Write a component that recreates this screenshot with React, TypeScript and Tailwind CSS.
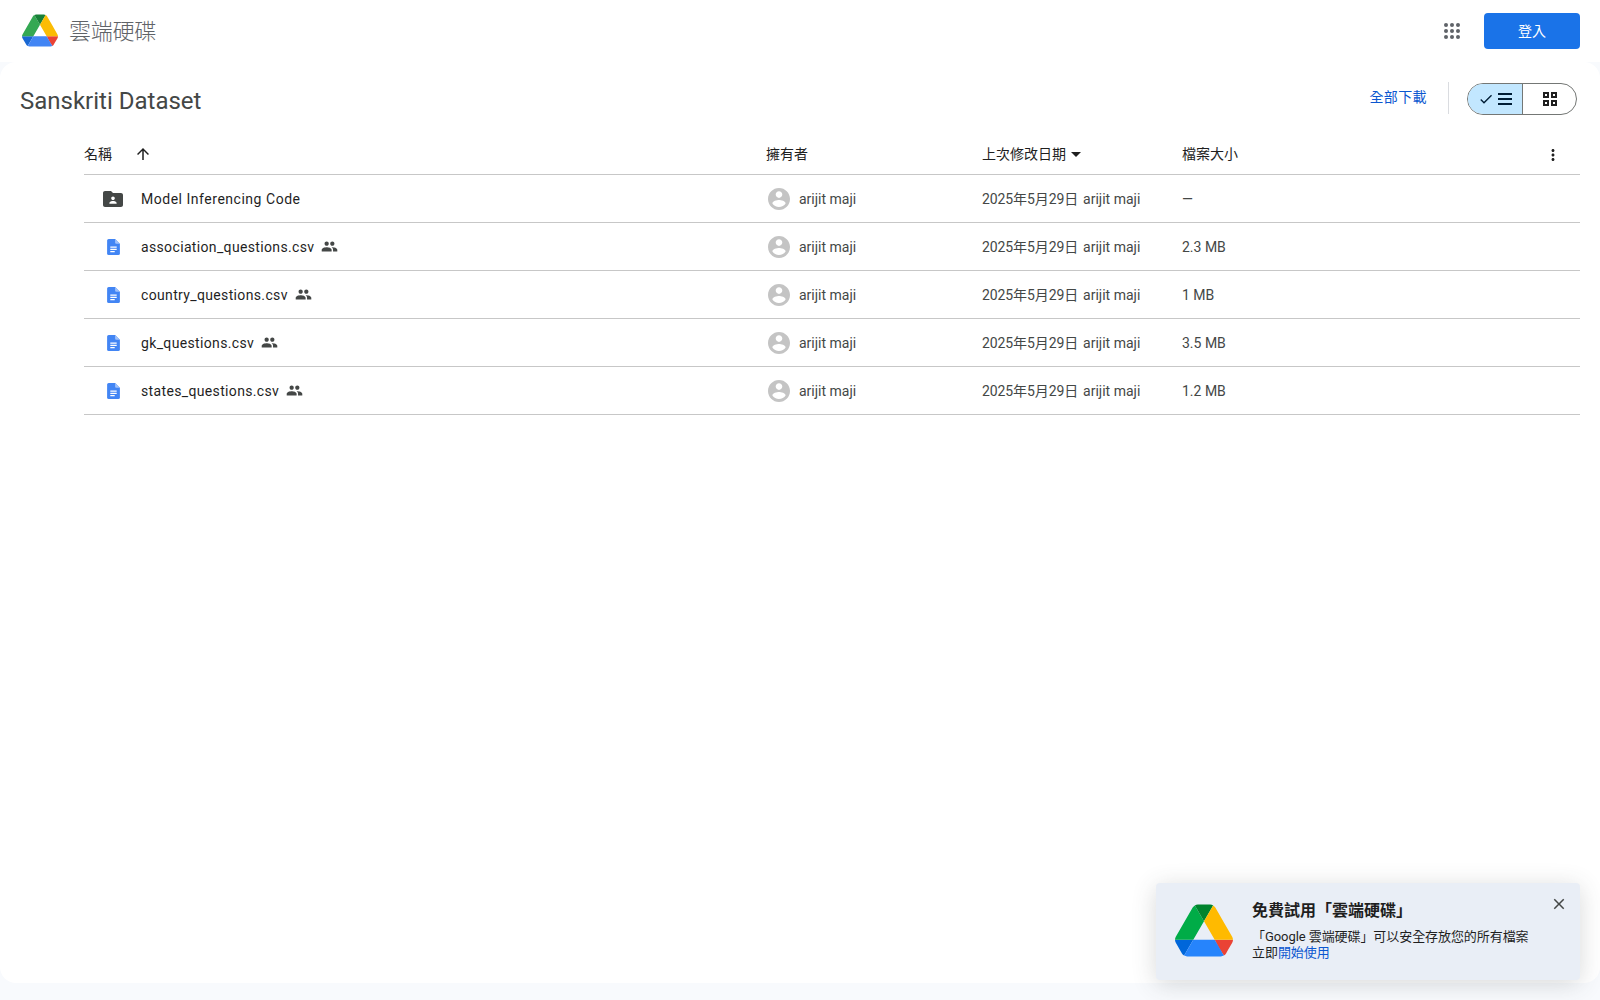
const F = "font-['Roboto','Noto_Sans_CJK_TC',sans-serif]";

function GoogleLogo({ cls, v }: { cls: string; v: 0 | 1 }) {
  const c = v === 0
    ? ["#1967d2", "#34a853", "#ea4335", "#188038", "#4285f4", "#fbbc04"]
    : ["#0066da", "#00ac47", "#ea4335", "#00832d", "#2684fc", "#ffba00"];
  return (
    <svg viewBox="0 0 87.3 78" className={cls}>
      <path d="m6.6 66.85 3.85 6.65c.8 1.4 1.95 2.5 3.3 3.3l13.75-23.8h-27.5c0 1.55.4 3.1 1.2 4.5z" fill={c[0]} />
      <path d="m43.65 25-13.75-23.8c-1.35.8-2.5 1.9-3.3 3.3l-25.4 44a9.06 9.06 0 0 0 -1.2 4.5h27.5z" fill={c[1]} />
      <path d="m73.55 76.8c1.35-.8 2.5-1.9 3.3-3.3l1.6-2.75 7.65-13.25c.8-1.4 1.2-2.95 1.2-4.5h-27.502l5.852 11.5z" fill={c[2]} />
      <path d="m43.65 25 13.75-23.8c-1.35-.8-2.9-1.2-4.5-1.2h-18.5c-1.6 0-3.15.45-4.5 1.2z" fill={c[3]} />
      <path d="m59.8 53h-32.3l-13.75 23.8c1.35.8 2.9 1.2 4.5 1.2h50.8c1.6 0 3.15-.45 4.5-1.2z" fill={c[4]} />
      <path d="m73.4 26.5-12.7-22c-.8-1.4-1.95-2.5-3.3-3.3l-13.75 23.8 16.15 28h27.45c0-1.55-.4-3.1-1.2-4.5z" fill={c[5]} />
    </svg>
  );
}

function Apps() {
  return (
    <svg viewBox="0 0 24 24" className="w-6 h-6" fill="#5f6368">
      {[6, 12, 18].flatMap((y) => [6, 12, 18].map((x) => <circle key={`${x}-${y}`} cx={x} cy={y} r="2" />))}
    </svg>
  );
}

function DocIcon() {
  return (
    <svg viewBox="0 0 16 20" className="w-[13px] h-4">
      <path d="M2 0h8l6 6v12a2 2 0 0 1-2 2H2a2 2 0 0 1-2-2V2a2 2 0 0 1 2-2z" fill="#4285f4" />
      <path d="M10 0l6 6h-4.5A1.5 1.5 0 0 1 10 4.5z" fill="#a1c2fa" />
      <path d="M4 9.5h8v1.4H4zM4 12.3h8v1.4H4zM4 15.1h5.5v1.4H4z" fill="#fff" />
    </svg>
  );
}

function FolderIcon() {
  return (
    <svg viewBox="2 4 20 16" className="w-5 h-4" fill="#444746">
      <path fillRule="evenodd" d="M20 6h-8l-2-2H4c-1.1 0-1.99.9-1.99 2L2 18c0 1.1.9 2 2 2h16c1.1 0 2-.9 2-2V8c0-1.1-.9-2-2-2zm-8 3.5c1 0 1.8.8 1.8 1.8s-.8 1.8-1.8 1.8-1.8-.8-1.8-1.8.8-1.8 1.8-1.8zm3.6 7.3H8.4v-.9c0-1.2 2.4-1.8 3.6-1.8s3.6.6 3.6 1.8v.9z" />
    </svg>
  );
}

function People() {
  return (
    <svg viewBox="0 0 24 24" className="w-[17px] h-[17px]" fill="#444746">
      <path d="M16 11c1.66 0 2.99-1.34 2.99-3S17.66 5 16 5c-1.66 0-3 1.34-3 3s1.34 3 3 3zm-8 0c1.66 0 2.99-1.34 2.99-3S9.66 5 8 5C6.34 5 5 6.34 5 8s1.34 3 3 3zm0 2c-2.33 0-7 1.17-7 3.5V19h14v-2.5c0-2.33-4.67-3.5-7-3.5zm8 0c-.29 0-.62.02-.97.05 1.16.84 1.97 1.97 1.97 3.45V19h6v-2.5c0-2.33-4.67-3.5-7-3.5z" />
    </svg>
  );
}

function Avatar() {
  return (
    <svg viewBox="2 2 20 20" className="w-[22px] h-[22px]" fill="#c4c4c4">
      <path d="M12 2C6.48 2 2 6.48 2 12s4.48 10 10 10 10-4.48 10-10S17.52 2 12 2zm0 3c1.66 0 3 1.34 3 3s-1.34 3-3 3-3-1.34-3-3 1.34-3 3-3zm0 14.2c-2.5 0-4.71-1.28-6-3.22.03-1.99 4-3.08 6-3.08 1.99 0 5.97 1.09 6 3.08-1.29 1.94-3.5 3.22-6 3.22z" />
    </svg>
  );
}

const rows = [
  { name: "Model Inferencing Code", size: "—", folder: true },
  { name: "association_questions.csv", size: "2.3 MB" },
  { name: "country_questions.csv", size: "1 MB" },
  { name: "gk_questions.csv", size: "3.5 MB" },
  { name: "states_questions.csv", size: "1.2 MB" },
];

const grid = "grid grid-cols-[683px_215px_200px_1fr] items-center";

export default function App() {
  return (
    <div className={`${F} relative h-screen overflow-hidden bg-[#f8fafd] flex flex-col`}>
      <header className="h-[62px] shrink-0 bg-white flex items-center pl-[22px] pr-5">
        <GoogleLogo v={0} cls="w-9 h-[33px] mb-[1px]" />
        <span className="ml-[11px] text-[22px] tracking-[-0.25px] text-[#5f6368] font-light">雲端硬碟</span>
        <div className="ml-auto flex items-center gap-[20px]">
          <Apps />
          <button className="w-24 h-9 rounded bg-[#1a73e8] text-white text-sm">登入</button>
        </div>
      </header>
      <main className="h-[921px] shrink-0 bg-white rounded-2xl pl-[20px] pr-5">
        <div className="h-[72px] flex items-center">
          <h1 className="text-2xl text-[#444746] mt-[6px]">Sanskriti Dataset</h1>
          <div className="ml-auto flex items-center mt-[1px]">
            <span className="text-sm tracking-[0.4px] text-[#0b57d0] mb-[3px]">全部下載</span>
            <div className="w-px h-8 bg-[#dadce0] ml-[21px] mr-[18px] mb-[2px]" />
            <div className="flex w-[110px] h-8 rounded-full border border-[#747775] overflow-hidden mr-[3px]">
              <div className="w-[55px] bg-[#c2e7ff] border-r border-[#747775] flex items-center justify-center gap-1 text-[#001d35]">
                <svg viewBox="0 0 24 24" className="w-4 h-4" fill="currentColor"><path d="M9 16.17 4.83 12l-1.42 1.41L9 19 21 7l-1.41-1.41z" /></svg>
                <svg viewBox="0 0 14 12" className="w-[14px] h-3" fill="currentColor"><path d="M0 0h14v2H0zM0 5h14v2H0zM0 10h14v2H0z" /></svg>
              </div>
              <div className="flex-1 flex items-center justify-center">
                <svg viewBox="0 0 14 14" className="w-[14px] h-[14px]" fill="#1f1f1f"><path fillRule="evenodd" d="M0 0h6v6H0zm2 2v2h2V2zM8 0h6v6H8zm2 2v2h2V2zM0 8h6v6H0zm2 2v2h2v-2zM8 8h6v6H8zm2 2v2h2v-2z" /></svg>
              </div>
            </div>
          </div>
        </div>
        <div className="ml-[64px]">
          <div className={`${grid} h-[41px] border-b border-[#c7c7c7] text-sm text-[#1f1f1f]`}>
            <div className="flex items-center gap-[22px]">
              <span>名稱</span>
              <svg viewBox="0 0 24 24" className="w-[18px] h-[18px]" fill="#1f1f1f"><path d="M4 12l1.41 1.41L11 7.83V20h2V7.83l5.58 5.59L20 12l-8-8-8 8z" /></svg>
            </div>
            <span className="-ml-px">擁有者</span>
            <div className="flex items-center gap-[5px]">
              <span>上次修改日期</span>
              <svg viewBox="0 0 10 5" className="w-[10px] h-[5px]" fill="#1f1f1f"><path d="M0 0l5 5 5-5z" /></svg>
            </div>
            <div className="flex items-center justify-between pr-[18px]">
              <span>檔案大小</span>
              <svg viewBox="0 0 24 24" className="w-[18px] h-[18px] mt-[2px]" fill="#1f1f1f"><path d="M12 8c1.1 0 2-.9 2-2s-.9-2-2-2-2 .9-2 2 .9 2 2 2zm0 2c-1.1 0-2 .9-2 2s.9 2 2 2 2-.9 2-2-.9-2-2-2zm0 6c-1.1 0-2 .9-2 2s.9 2 2 2 2-.9 2-2-.9-2-2-2z" /></svg>
            </div>
          </div>
          {rows.map((r) => (
            <div key={r.name} className={`${grid} h-12 border-b border-[#c7c7c7] text-sm`}>
              <div className="flex items-center">
                <div className="w-[57px] flex justify-end pr-[21px]">
                  {r.folder ? <div className="mr-[-3px]"><FolderIcon /></div> : <DocIcon />}
                </div>
                <span className={`text-[#1f1f1f] ${r.folder ? "tracking-[0.52px]" : "tracking-[0.35px]"}`}>{r.name}</span>
                {!r.folder && <span className="ml-[7px] flex"><People /></span>}
              </div>
              <div className="flex items-center gap-[9px] text-[#444746] pl-[1px]">
                <Avatar />
                <span>arijit maji</span>
              </div>
              <div className="flex items-center gap-[5px] text-[#444746]">
                <span className="tracking-[-0.1px]">2025年5月29日</span>
                <span>arijit maji</span>
              </div>
              <span className="text-[#444746]">{r.size}</span>
            </div>
          ))}
        </div>
      </main>
      <div className="absolute right-[20px] top-[883px] w-[424px] h-[97px] bg-[#e9eef6] rounded shadow-[0_4px_24px_rgba(60,64,67,0.2)] flex pl-[19px] pt-[21px]">
        <GoogleLogo v={1} cls="w-[58px] h-[53px] shrink-0" />
        <div className="ml-[19px] -mt-[5px] text-[13px] leading-4 text-[#1f1f1f] tracking-[-0.07px]">
          <div className="text-base font-bold leading-6 mb-[6px] tracking-normal">免費試用「雲端硬碟」</div>
          <div>「Google 雲端硬碟」可以安全存放您的所有檔案</div>
          <div>立即<span className="text-[#0b57d0]">開始使用</span></div>
        </div>
        <svg viewBox="0 0 24 24" className="absolute right-[12px] top-[12px] w-[18px] h-[18px]" fill="#444746"><path d="M19 6.41 17.59 5 12 10.59 6.41 5 5 6.41 10.59 12 5 17.59 6.41 19 12 13.41 17.59 19 19 17.59 13.41 12z" /></svg>
      </div>
    </div>
  );
}
